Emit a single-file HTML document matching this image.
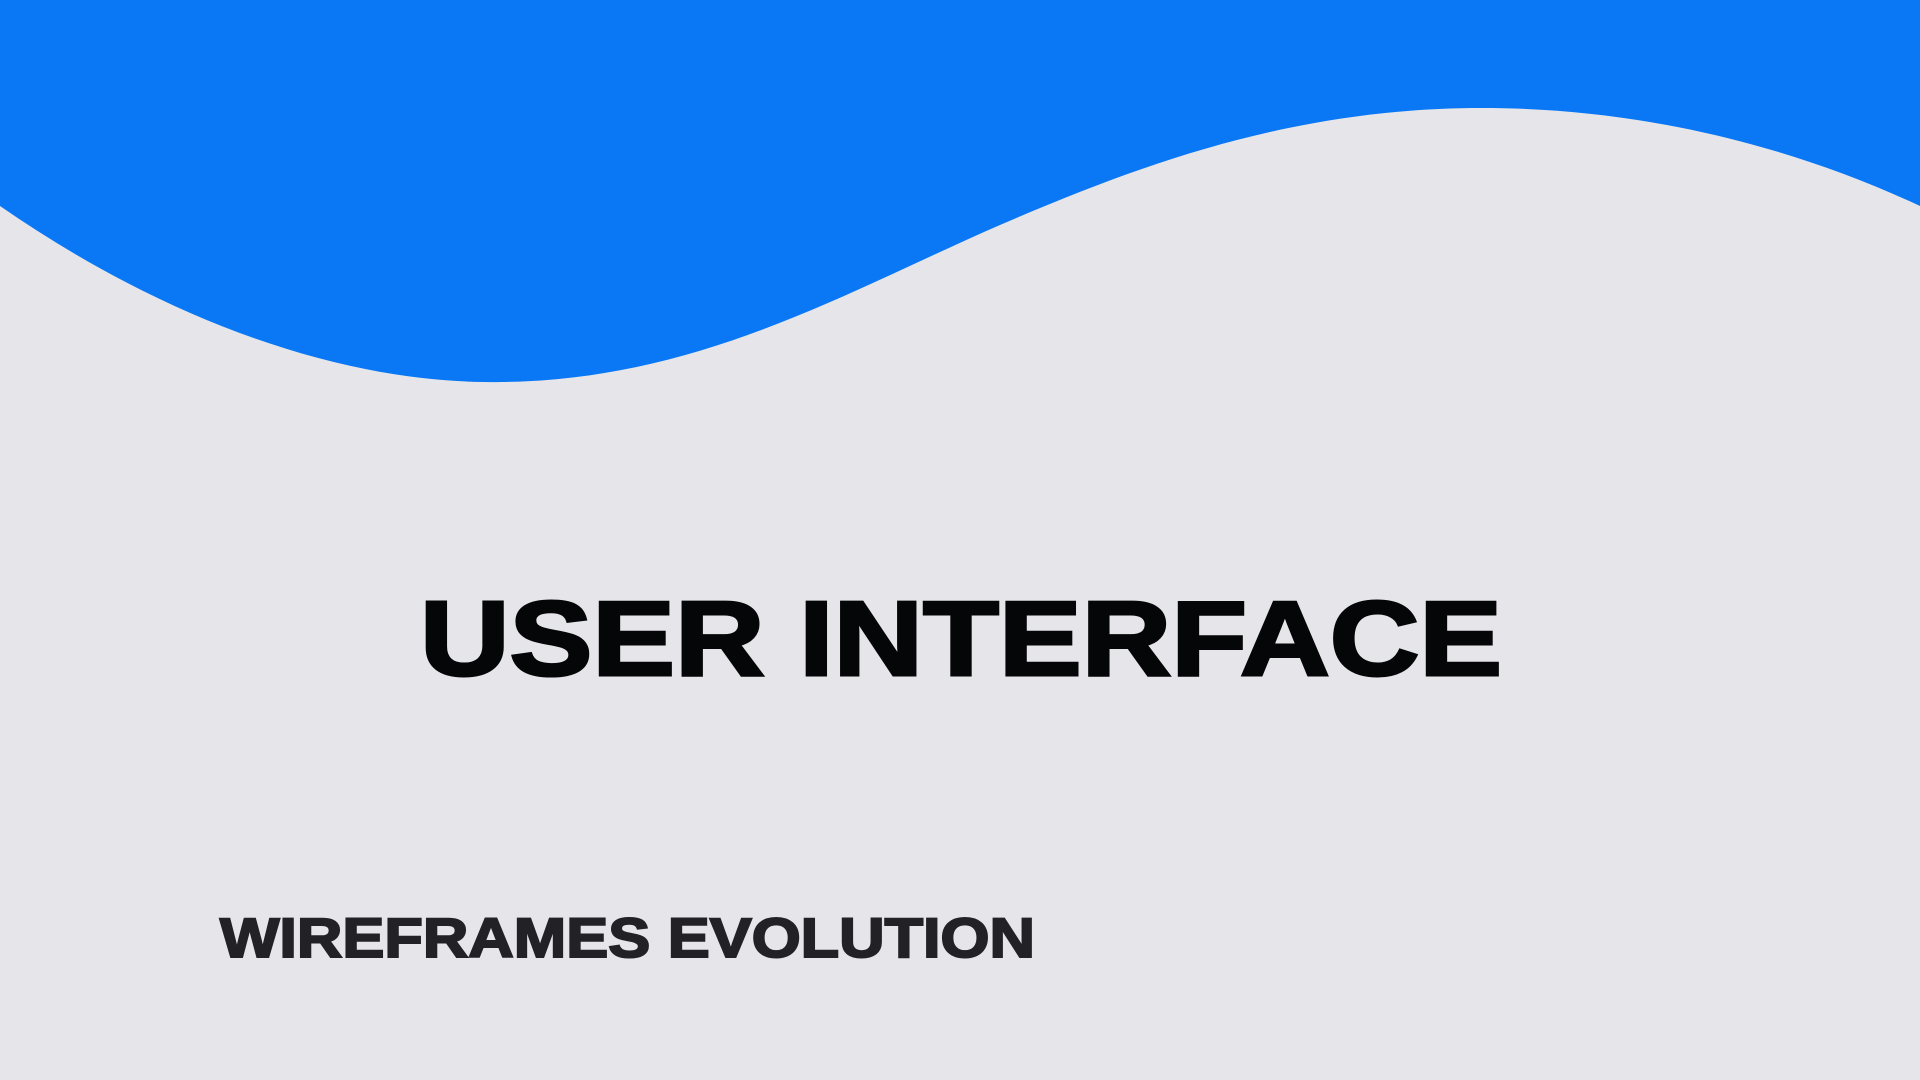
<!DOCTYPE html>
<html><head><meta charset="utf-8"><style>
html,body{margin:0;padding:0;width:1920px;height:1080px;overflow:hidden;background:#e6e6ea}
svg{position:absolute;left:0;top:0}
</style></head><body>
<svg width="1920" height="1080" viewBox="0 0 1920 1080">
<rect width="1920" height="1080" fill="#e6e6ea"/>
<path d="M0,0 H1920 V206 C1800,150 1650,108 1482,108 C1300,108 1150,160 1000,225 C850,290 700,380 502,382 C330,385 150,310 0,206 Z" fill="#0a78f5"/>
<text x="420" y="675" font-family="Liberation Sans, Arial, sans-serif" font-weight="900" font-size="106" fill="#050608" textLength="1082" lengthAdjust="spacingAndGlyphs" stroke="#050608" stroke-width="3">USER INTERFACE</text>
<text x="220" y="957" font-family="Liberation Sans, Arial, sans-serif" font-weight="900" font-size="56" fill="#222226" textLength="815" lengthAdjust="spacingAndGlyphs" stroke="#222226" stroke-width="2">WIREFRAMES EVOLUTION</text>
</svg>
</body></html>
